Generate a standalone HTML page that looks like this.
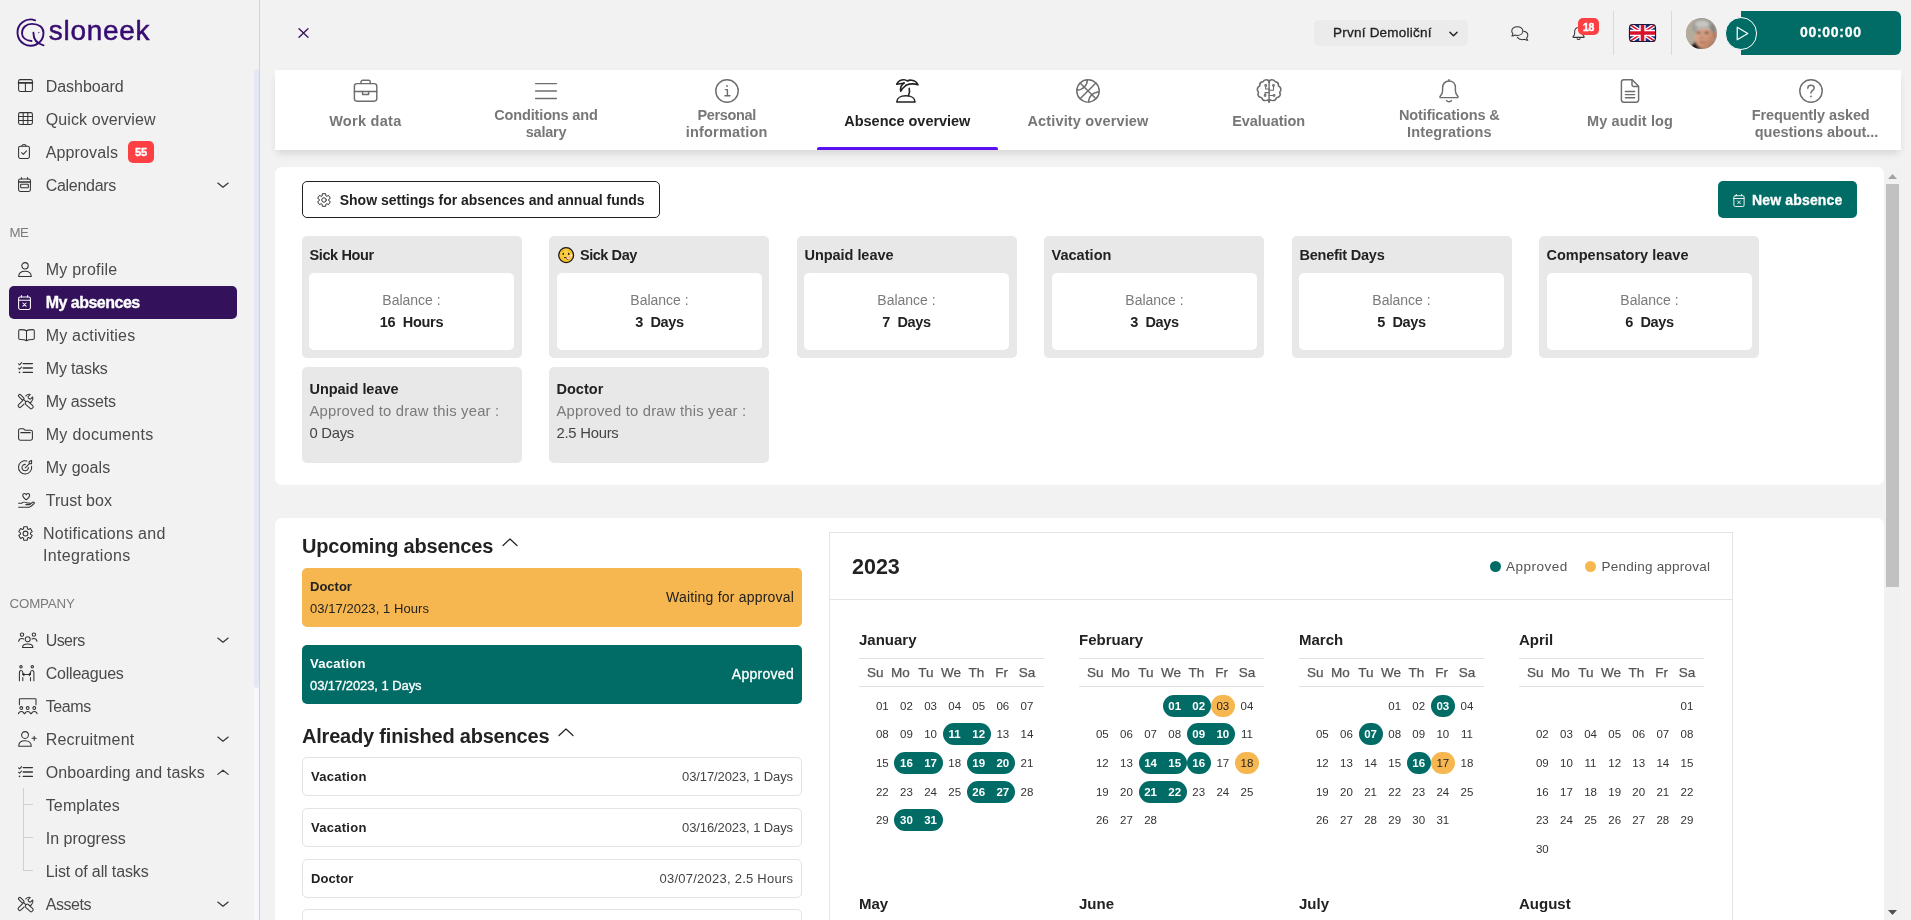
<!DOCTYPE html><html lang="en"><head><meta charset="utf-8"><title>Sloneek - My absences</title><style>
*{box-sizing:border-box}
html,body{margin:0;padding:0}
body{will-change:transform;width:1911px;height:920px;overflow:hidden;background:#f2f2f2;font-family:"Liberation Sans",sans-serif;color:#222;position:relative;font-size:16px}
.abs{position:absolute}
svg{display:block;overflow:visible}
/* sidebar */
#sb{position:absolute;left:0;top:0;width:260px;height:920px;border-right:1px solid #d3d3d3;background:#f2f2f2}
#sbtrack{position:absolute;left:254px;top:69px;width:5px;height:619px;background:#e4e8f3;border-radius:3px}
#sbtrack0{position:absolute;left:254px;top:69px;width:5px;height:860px;background:#f7f8fc;border-radius:3px 3px 0 0}
.logo-t{position:absolute;left:48.8px;top:13.3px;font-size:28px;line-height:36px;color:#370c70;letter-spacing:.7px;-webkit-text-stroke:.5px #370c70}
.ni{position:absolute;left:9px;width:228px;height:33px;border-radius:5px;color:#4a4a4a;font-size:16px;line-height:33px;white-space:nowrap}
.ni .ic{position:absolute;color:#333}
.ni .tx{position:absolute;left:36.7px;top:0}
.ni .ch{position:absolute;left:208px;top:13px;width:12px;height:7px;color:#333}
.ni.act{background:#33125b;color:#fff;font-weight:700;-webkit-text-stroke:.35px #fff}
.ni.act .ic{color:#fff}
.sec{position:absolute;left:9.5px;font-size:13.3px;color:#7a7a7a;line-height:16px}
.badge{position:absolute;background:#fd4044;-webkit-text-stroke:.4px #fff;color:#fff;font-weight:700;text-align:center;border-radius:4px}
/* header */
.sel{position:absolute;left:1314px;top:20px;width:154px;height:26px;background:#ebebeb;border-radius:5px}
.sel span{position:absolute;left:19px;top:-.3px;line-height:25px;font-size:13.5px;color:#222;-webkit-text-stroke:.3px #222;letter-spacing:.23px}
.vdiv{position:absolute;top:11px;width:1px;height:44px;background:#d9d9d9}
/* tabs */
#tabs{position:absolute;left:275px;top:70px;width:1626px;height:80px;background:#fff;box-shadow:0 5px 8px -2px rgba(0,0,0,.13)}
.tab{position:absolute;top:0;height:80px;width:180.67px;text-align:center;color:#777;font-weight:700;font-size:14.5px;line-height:17px}
.tab .ti{position:absolute;left:50%;top:9px;width:26px;height:24px;margin-left:-13px;color:#6d6d6d}
.tab .tl{position:absolute;left:0;right:0}
.tab.on{color:#222}
.tab.on .ti{color:#222}
.tab.on:after{content:"";position:absolute;left:0;right:0;bottom:0;height:3px;background:#5a10f0;border-radius:2px 2px 0 0}
/* cards */
.card{position:absolute;left:275px;width:1609px;background:#fff;border-radius:7px}
.btn1{position:absolute;left:27px;top:14px;width:358px;height:37px;border:1px solid #222;border-radius:5px;font-weight:700;font-size:14px;line-height:35px;color:#222;background:#fff}
.btn2{position:absolute;left:1443px;top:14px;width:139px;height:37px;border-radius:5px;background:#016c66;color:#fff;font-weight:700;font-size:14px;line-height:37px}
.gb{position:absolute;width:220px;background:#e8e8e8;border-radius:5px}
.gb .h{position:absolute;left:7.5px;top:10px;font-weight:700;font-size:14.5px;line-height:18px;color:#222;white-space:nowrap}
.gb .w{position:absolute;left:7px;top:37px;width:205px;height:77px;background:#fff;border-radius:5px;text-align:center}
.gb .w .a{position:absolute;left:0;right:0;top:18px;font-size:14px;line-height:18px;color:#7a7a7a}
.gb .w .b{position:absolute;left:0;right:0;top:40px;font-size:14.5px;line-height:18px;color:#222;font-weight:700;white-space:pre}
.gb .s1{position:absolute;left:7.5px;top:35px;font-size:14.8px;line-height:18px;color:#7a7a7a;white-space:nowrap}
.gb .s2{position:absolute;left:7.5px;top:57px;font-size:14.8px;line-height:18px;color:#444;white-space:nowrap}
h2{position:absolute;margin:0;font-size:20px;line-height:24px;font-weight:700;color:#222;white-space:nowrap;letter-spacing:-.2px}
.up{position:absolute;left:27px;width:500px;height:59px;border-radius:5px;font-size:13px}
.up .n{position:absolute;left:8px;top:10px;font-weight:700;line-height:16px}
.up .d{position:absolute;left:8px;top:32px;line-height:16px}
.up .st{position:absolute;right:8px;top:20px;line-height:18px;font-size:14px}
.fin{position:absolute;left:27px;width:500px;height:39px;border:1px solid #e3e3e3;border-radius:5px;font-size:13px;line-height:37px;background:#fff}
.fin .n{position:absolute;left:8px;font-weight:700;color:#222}
.fin .d{position:absolute;right:8px;color:#444}
/* calendar */
#cal{position:absolute;left:554px;top:14px;width:904px;height:500px;border:1px solid #e4e4e4;border-bottom:none}
#cal .yr{position:absolute;left:22px;top:21px;font-size:21.5px;line-height:26px;font-weight:700;color:#222}
#cal .hb{position:absolute;left:0;right:0;top:66px;height:1px;background:#e4e4e4}
.lg{position:absolute;top:26px;font-size:13.5px;line-height:16px;color:#555;white-space:nowrap}
.dot{position:absolute;width:11px;height:11px;border-radius:50%}
.mo{position:absolute;width:185px}
.mo .mn{position:absolute;left:0;top:-9px;font-size:15px;line-height:20px;font-weight:700;color:#222}
.mo .hd{position:absolute;left:0;top:19px;width:185px;height:29px;border-top:1px solid #e0e0e0;border-bottom:1px solid #e0e0e0}
.mo .hd span{position:absolute;top:0;width:30px;text-align:center;font-size:13.5px;line-height:27px;color:#555;-webkit-text-stroke:.25px #555}
.dn{position:absolute;width:24.1px;height:22px;text-align:center;font-size:11.5px;line-height:22px;color:#333}
.dn.t{color:#fff;font-weight:700}
.dn.o{color:#222}
.pill{position:absolute;height:22px;border-radius:11px}
</style></head><body>
<div id="sb">
<svg class="abs" style="left:15px;top:17px" viewBox="15 17 31 31" width="31" height="31" fill="none" stroke="#370c70" stroke-width="1.900" stroke-linecap="round"><path d="M35.100 20.300A13.100 13.100 0 1 0 36.500 44.300"/><path d="M31.500 41C26 40.500 22 37.700 22 33.200c0-5.600 4-9.300 10-9.300 7 0 11.500 3.600 11.500 8.800 0 4.500-2.500 9.300-7 11.600"/><path d="M33.400 32.800c0 5.200 2.600 10.700 10.200 12.500"/><path d="M38.300 31.700l1.400.9-1.400.9z" fill="#370c70" stroke="none"/></svg>
<div class="logo-t">sloneek</div>
<div id="sbtrack0"></div><div id="sbtrack"></div>
<div class="ni" style="top:70px"><span class="ic" style="left:9.0px;top:9.0px"><svg viewBox="0 0 15 13" width="15" height="13" fill="none" stroke="currentColor" stroke-width="1.05" stroke-linecap="round" stroke-linejoin="round" ><rect x=".6" y=".6" width="13.8" height="11.8" rx="1.6"/><path d="M.6 3.9h13.8" stroke-width="1.7"/><path d="M7.4 4v8.4"/></svg></span><span class="tx" style="letter-spacing:-0.03px">Dashboard</span></div>
<div class="ni" style="top:103px"><span class="ic" style="left:9.0px;top:9.0px"><svg viewBox="0 0 15 13" width="15" height="13" fill="none" stroke="currentColor" stroke-width="1.05" stroke-linecap="round" stroke-linejoin="round" ><rect x=".6" y=".6" width="13.8" height="11.8" rx="1.6"/><path d="M5.2.6v11.8M9.8.6v11.8M.6 4.5h13.8M.6 8.5h13.8"/></svg></span><span class="tx" style="letter-spacing:0.11px">Quick overview</span></div>
<div class="ni" style="top:136px"><span class="ic" style="left:9.0px;top:7.7px"><svg viewBox="0 0 12 15" width="12" height="15" fill="none" stroke="currentColor" stroke-width="1.05" stroke-linecap="round" stroke-linejoin="round" ><rect x=".6" y="2.2" width="10.8" height="12.2" rx="1.6"/><path d="M4 2.2V1.8a2 1.3 0 0 1 4 0v.4"/><path d="M3.6 8.6l1.7 1.7 3.2-3.5"/></svg></span><span class="tx" style="letter-spacing:0.13px">Approvals</span><span class="badge" style="left:119px;top:4.5px;width:26px;height:22px;font-size:11px;line-height:22.500px;border-radius:5px">55</span></div>
<div class="ni" style="top:169px"><span class="ic" style="left:9.0px;top:8.2px"><svg viewBox="0 0 13 15" width="13" height="15" fill="none" stroke="currentColor" stroke-width="1.05" stroke-linecap="round" stroke-linejoin="round" ><rect x=".6" y="2" width="11.8" height="12.4" rx="1.6"/><path d="M3.4.5v1.5M9.6.5v1.5"/><path d="M.6 5h11.8" stroke-width="1.6"/><rect x="2.7" y="7.2" width="7.6" height="3.6" rx=".5"/></svg></span><span class="tx" style="letter-spacing:-0.29px">Calendars</span><span class="ch"><svg viewBox="0 0 12 7" width="12" height="7" fill="none" stroke="currentColor" stroke-width="1.150" stroke-linecap="round" stroke-linejoin="round"><path d="M.800 1l5.200 4.200L11.200 1"/></svg></span></div>
<div class="sec" style="top:224.700px;letter-spacing:-0.48px">ME</div>
<div class="ni" style="top:253px"><span class="ic" style="left:9.0px;top:9.0px"><svg viewBox="0 0 14 15" width="14" height="15" fill="none" stroke="currentColor" stroke-width="1.05" stroke-linecap="round" stroke-linejoin="round" ><circle cx="7" cy="3.8" r="3.2"/><path d="M.7 14.4c0-3.3 2.4-5.2 6.3-5.2s6.3 1.9 6.3 5.2z"/></svg></span><span class="tx" style="letter-spacing:0.24px">My profile</span></div>
<div class="ni act" style="top:286px"><span class="ic" style="left:9.0px;top:9.3px"><svg viewBox="0 0 13 15" width="13" height="15" fill="none" stroke="currentColor" stroke-width="1.05" stroke-linecap="round" stroke-linejoin="round" ><rect x=".6" y="2" width="11.8" height="12.4" rx="1.6"/><path d="M3.4.5v1.5M9.6.5v1.5"/><path d="M.6 5.2h11.8"/><path d="M4.9 8l3.2 3.2M8.1 8l-3.2 3.2"/></svg></span><span class="tx" style="letter-spacing:-0.51px">My absences</span></div>
<div class="ni" style="top:319px"><span class="ic" style="left:9.0px;top:10.2px"><svg viewBox="0 0 17 13" width="17" height="13" fill="none" stroke="currentColor" stroke-width="1.05" stroke-linecap="round" stroke-linejoin="round" ><path d="M8.500 1.700v10.100M8.500 1.700C7.500 1 6 .600 2.200.600A1.500 1.500 0 0 0 .700 2.100V9a1.500 1.500 0 0 0 1.500 1.500c3.600 0 5.200.400 6.300 1.300 1.100-.900 2.700-1.300 6.300-1.300A1.500 1.500 0 0 0 16.300 9V2.100A1.500 1.500 0 0 0 14.800.600C11 .600 9.500 1 8.500 1.700z"/></svg></span><span class="tx" style="letter-spacing:0.2px">My activities</span></div>
<div class="ni" style="top:352px"><span class="ic" style="left:9.0px;top:10.3px"><svg viewBox="0 0 16 12" width="16" height="12" fill="none" stroke="currentColor" stroke-width="1.05" stroke-linecap="round" stroke-linejoin="round" ><path d="M5.200 1.600h9.200M5.200 6h9.200M5.200 10.400h9.200" stroke-width="1.300"/><path d="M.600 1.800l1 1 2-2.200M.600 6.200l1 1 2-2.200"/><circle cx="1.500" cy="10.400" r=".800" fill="currentColor" stroke="none"/></svg></span><span class="tx" style="letter-spacing:-0.14px">My tasks</span></div>
<div class="ni" style="top:385px"><span class="ic" style="left:9.0px;top:9.0px"><svg viewBox="0 0 16 15" width="16" height="15" fill="none" stroke="currentColor" stroke-width="1.05" stroke-linecap="round" stroke-linejoin="round" ><g transform="rotate(45 3.2 3.2)"><rect x="0" y="1.900" width="6.400" height="2.600" rx=".900"/></g><path d="M5.800 5.600l2 2"/><g transform="rotate(42 11.300 11)"><rect x="6.700" y="9.100" width="9" height="3.800" rx="1.500"/></g><g transform="rotate(-45 3.300 10.300)"><path d="M7.300 8.600H1.200a1.700 1.700 0 0 0 0 3.400h4.200"/></g><path d="M7.800 1.900C9.200.500 11 .100 12.300.500L10.100 2.700c-.300 1.300.900 2.600 2.300 2.400l2.300-2.100c.600 1.500.200 3.300-1.100 4.600-.500.500-1.100.800-1.700 1"/></svg></span><span class="tx" style="letter-spacing:-0.22px">My assets</span></div>
<div class="ni" style="top:418px"><span class="ic" style="left:9.0px;top:9.8px"><svg viewBox="0 0 15 13" width="15" height="13" fill="none" stroke="currentColor" stroke-width="1.05" stroke-linecap="round" stroke-linejoin="round" ><path d="M.6 2.300A1.600 1.600 0 0 1 2.200.700h3.200l1.600 1.500h5.800a1.600 1.600 0 0 1 1.600 1.600v6.800a1.600 1.600 0 0 1-1.600 1.600H2.200A1.600 1.600 0 0 1 .6 10.600z"/><path d="M2.900 4.700h9.300" stroke-width="1.300"/></svg></span><span class="tx" style="letter-spacing:0.33px">My documents</span></div>
<div class="ni" style="top:451px"><span class="ic" style="left:9.0px;top:9.0px"><svg viewBox="0 0 15 15" width="15" height="15" fill="none" stroke="currentColor" stroke-width="1.05" stroke-linecap="round" stroke-linejoin="round" ><path d="M13.600 6.200A6.600 6.600 0 1 1 8.800 1"/><path d="M10.400 7.600A3.200 3.200 0 1 1 7.400 4.400"/><path d="M7.200 7.800l4-4M11.200 3.800V1.400l2.400-1v2.400l-1 1zM11.200 3.800h2.400"/></svg></span><span class="tx" style="letter-spacing:0.06px">My goals</span></div>
<div class="ni" style="top:484px"><span class="ic" style="left:9.0px;top:9.2px"><svg viewBox="0 0 17 15" width="17" height="15" fill="none" stroke="currentColor" stroke-width="1.05" stroke-linecap="round" stroke-linejoin="round" ><path d="M8.200 6.800C5.400 4.600 4.800 3.400 4.800 2.400a1.700 1.700 0 0 1 3.400-.4 1.700 1.700 0 0 1 3.400.4c0 1-.6 2.200-3.400 4.400z"/><path d="M.6 10.200h3.200c1.200-1.400 3.800-1.200 5.400-.2h2.200c1.200 0 1.200 1.600 0 1.600H7.800"/><path d="M.6 14.200h9.800c1.400 0 4.200-2 5.800-3.800.6-.8-.4-1.800-1.400-1.200l-3 2"/></svg></span><span class="tx" style="letter-spacing:0.02px">Trust box</span></div>
<div class="ni" style="top:517px"><span class="ic" style="left:9.0px;top:9.0px"><svg viewBox="0 0 15 15" width="15" height="15" fill="none" stroke="currentColor" stroke-width="1.05" stroke-linecap="round" stroke-linejoin="round" ><path d="M5.51 2.91 L5.69 0.74 L9.31 0.74 L9.49 2.91 L10.48 3.49 L12.45 2.55 L14.26 5.69 L12.47 6.93 L12.47 8.07 L14.26 9.31 L12.45 12.45 L10.48 11.51 L9.49 12.09 L9.31 14.26 L5.69 14.26 L5.51 12.09 L4.52 11.51 L2.55 12.45 L0.74 9.31 L2.53 8.07 L2.53 6.93 L0.74 5.69 L2.55 2.55 L4.52 3.49z"/><circle cx="7.5" cy="7.5" r="2.4"/></svg></span><span class="tx" style="left:34px;letter-spacing:0.25px">Notifications and</span></div>
<div class="ni" style="top:539px"><span class="tx" style="left:34px;letter-spacing:0.32px">Integrations</span></div>
<div class="sec" style="top:596px;letter-spacing:-0.14px">COMPANY</div>
<div class="ni" style="top:624px"><span class="ic" style="left:9.0px;top:7.7px"><svg viewBox="0 0 20 16" width="20" height="16" fill="none" stroke="currentColor" stroke-width="1.05" stroke-linecap="round" stroke-linejoin="round" ><circle cx="9.700" cy="7.200" r="2.500"/><path d="M4.500 15.500c0-2.400 2-3.600 5.200-3.600s5.200 1.200 5.200 3.600z"/><circle cx="4" cy="2.600" r="1.700"/><circle cx="15.900" cy="2.600" r="1.700"/><path d="M.600 9.300c.400-1.800 1.600-2.800 3.200-2.800.800 0 1.400.200 1.800.500M19 9.300c-.400-1.800-1.600-2.800-3.200-2.800-.800 0-1.400.200-1.800.500"/></svg></span><span class="tx" style="letter-spacing:-0.56px">Users</span><span class="ch"><svg viewBox="0 0 12 7" width="12" height="7" fill="none" stroke="currentColor" stroke-width="1.150" stroke-linecap="round" stroke-linejoin="round"><path d="M.800 1l5.200 4.200L11.200 1"/></svg></span></div>
<div class="ni" style="top:657px"><span class="ic" style="left:9.0px;top:8.0px"><svg viewBox="0 0 17 16" width="17" height="16" fill="none" stroke="currentColor" stroke-width="1.05" stroke-linecap="round" stroke-linejoin="round" ><circle cx="3" cy="1.800" r="1.200"/><circle cx="14.300" cy="1.800" r="1.200"/><path d="M1.400 15.700V8c0-1.600.600-2.600 1.600-2.600s1.800.800 1.800 2v2.100M4.800 12.600v3.100"/><path d="M15.900 15.700V8c0-1.600-.600-2.600-1.600-2.600s-1.800.800-1.800 2v2.100M12.500 12.600v3.100"/><path d="M4.800 9.500h7.700M6 8.300L4.800 9.500 6 10.700M11.300 8.300l1.200 1.200-1.200 1.200"/></svg></span><span class="tx" style="letter-spacing:-0.21px">Colleagues</span></div>
<div class="ni" style="top:690px"><span class="ic" style="left:9.0px;top:7.8px"><svg viewBox="0 0 20 16" width="20" height="16" fill="none" stroke="currentColor" stroke-width="1.05" stroke-linecap="round" stroke-linejoin="round" ><path d="M1.400 6.700V1.400a.700.700 0 0 1 .700-.700h15.200a.700.700 0 0 1 .700.700v5.300"/><circle cx="3.300" cy="10" r="1.400"/><circle cx="9.700" cy="10" r="1.400"/><circle cx="16.300" cy="10" r="1.400"/><path d="M.500 15.700c.300-1.500 1.300-2.300 2.800-2.300s2.500.800 2.800 2.300M6.900 15.700c.300-1.500 1.300-2.300 2.800-2.300s2.500.800 2.800 2.300M13.500 15.700c.300-1.500 1.300-2.300 2.800-2.300s2.500.800 2.800 2.300"/></svg></span><span class="tx" style="letter-spacing:-0.38px">Teams</span></div>
<div class="ni" style="top:723px"><span class="ic" style="left:9.0px;top:8.0px"><svg viewBox="0 0 19 16" width="19" height="16" fill="none" stroke="currentColor" stroke-width="1.05" stroke-linecap="round" stroke-linejoin="round" ><circle cx="7" cy="4" r="3.400"/><path d="M.7 15.200c0-3.400 2.400-5.400 6.300-5.400s6.300 2 6.300 5.400z"/><path d="M16.200 5.200v4.200M14.100 7.300h4.200"/></svg></span><span class="tx" style="letter-spacing:0.23px">Recruitment</span><span class="ch"><svg viewBox="0 0 12 7" width="12" height="7" fill="none" stroke="currentColor" stroke-width="1.150" stroke-linecap="round" stroke-linejoin="round"><path d="M.800 1l5.200 4.200L11.200 1"/></svg></span></div>
<div class="ni" style="top:756px"><span class="ic" style="left:9.0px;top:9.8px"><svg viewBox="0 0 16 12" width="16" height="12" fill="none" stroke="currentColor" stroke-width="1.05" stroke-linecap="round" stroke-linejoin="round" ><path d="M5.200 1.600h9.200M5.200 6h9.200M5.200 10.400h9.200" stroke-width="1.300"/><path d="M.600 1.800l1 1 2-2.200M.600 6.200l1 1 2-2.200"/><circle cx="1.500" cy="10.400" r=".800" fill="currentColor" stroke="none"/></svg></span><span class="tx" style="letter-spacing:0.13px">Onboarding and tasks</span><span class="ch"><svg viewBox="0 0 12 7" width="12" height="7" fill="none" stroke="currentColor" stroke-width="1.150" stroke-linecap="round" stroke-linejoin="round"><path d="M.800 5.400L6 1.200l5.200 4.200"/></svg></span></div>
<div class="abs" style="left:23px;top:788px;width:1px;height:83px;background:#d0d0d0"></div>
<div class="abs" style="left:23px;top:804px;width:10px;height:1px;background:#d0d0d0"></div>
<div class="ni" style="top:789px"><span class="tx" style="letter-spacing:0.15px">Templates</span></div>
<div class="abs" style="left:23px;top:837px;width:10px;height:1px;background:#d0d0d0"></div>
<div class="ni" style="top:822px"><span class="tx" style="letter-spacing:0.01px">In progress</span></div>
<div class="abs" style="left:23px;top:870px;width:10px;height:1px;background:#d0d0d0"></div>
<div class="ni" style="top:855px"><span class="tx" style="letter-spacing:-0.12px">List of all tasks</span></div>
<div class="ni" style="top:888px"><span class="ic" style="left:9.0px;top:9.0px"><svg viewBox="0 0 16 15" width="16" height="15" fill="none" stroke="currentColor" stroke-width="1.05" stroke-linecap="round" stroke-linejoin="round" ><g transform="rotate(45 3.2 3.2)"><rect x="0" y="1.900" width="6.400" height="2.600" rx=".900"/></g><path d="M5.800 5.600l2 2"/><g transform="rotate(42 11.300 11)"><rect x="6.700" y="9.100" width="9" height="3.800" rx="1.500"/></g><g transform="rotate(-45 3.300 10.300)"><path d="M7.300 8.600H1.200a1.700 1.700 0 0 0 0 3.400h4.200"/></g><path d="M7.800 1.900C9.200.500 11 .100 12.300.500L10.100 2.700c-.300 1.300.900 2.600 2.300 2.400l2.300-2.100c.600 1.500.200 3.300-1.100 4.600-.500.500-1.100.800-1.700 1"/></svg></span><span class="tx" style="letter-spacing:-0.42px">Assets</span><span class="ch"><svg viewBox="0 0 12 7" width="12" height="7" fill="none" stroke="currentColor" stroke-width="1.150" stroke-linecap="round" stroke-linejoin="round"><path d="M.800 1l5.200 4.200L11.200 1"/></svg></span></div>
</div>
<svg class="abs" style="left:298px;top:28px" viewBox="0 0 11 10" width="11" height="10" fill="none" stroke="#33125b" stroke-width="1.300" stroke-linecap="round"><path d="M1 .8l9 8.400M10 .8l-9 8.400"/></svg>
<div class="sel"><span>První Demoliční</span><svg class="abs" style="left:135px;top:10.5px" viewBox="0 0 10 6" width="9" height="6" fill="none" stroke="#222" stroke-width="1.6" stroke-linecap="round" stroke-linejoin="round"><path d="M1 1l4 4 4-4"/></svg></div>
<svg class="abs" style="left:1510.600px;top:25.500px" viewBox="0 0 19 16" width="17.600" height="14.800" fill="none" stroke="#333" stroke-width="1.100" stroke-linejoin="round" stroke-linecap="round"><path d="M6.800.8C3.400.8.800 2.800.800 5.400c0 1.200.6 2.200 1.400 3-.2 1-.8 1.800-1.400 2.400 1.400 0 2.600-.4 3.400-1 .8.200 1.600.4 2.600.4 3.400 0 6-2 6-4.800S10.200.8 6.800.8z"/><path d="M13.600 5.600c2.600.4 4.600 2.200 4.600 4.400 0 1.200-.6 2.200-1.400 3 .2 1 .8 1.800 1.400 2.400-1.400 0-2.600-.4-3.400-1-.8.200-1.600.4-2.600.4-2.400 0-4.400-1-5.400-2.600"/></svg>
<svg class="abs" style="left:1571.700px;top:26.300px" viewBox="0 0 14 15" width="13.200" height="14" fill="none" stroke="#333" stroke-width="1.100" stroke-linejoin="round" stroke-linecap="round"><path d="M7 .6v1M7 1.600c-2.600 0-4.200 1.800-4.200 4.400v2c0 1.200-.6 2.200-1.600 3.200-.4.400-.2 1 .4 1h10.800c.6 0 .8-.6.4-1-1-1-1.600-2-1.600-3.200V6c0-2.600-1.600-4.400-4.200-4.400z"/><path d="M5.400 13.600c.4 1 2.800 1 3.200 0"/></svg>
<span class="badge" style="left:1578px;top:18px;width:21px;height:17px;font-size:10.500px;line-height:18.500px;border-radius:5px;letter-spacing:-.3px;background:#fd4044">18</span>
<div class="vdiv" style="left:1613px"></div>
<svg class="abs" style="left:1629px;top:24px" viewBox="0 0 60 40" width="27" height="18" preserveAspectRatio="none"><defs><clipPath id="fc"><rect x="0" y="0" width="60" height="40" rx="8"/></clipPath></defs><g clip-path="url(#fc)"><rect width="60" height="40" fill="#1c2a7a"/><path d="M0 0L60 40M60 0L0 40" stroke="#fff" stroke-width="9"/><path d="M0 0L60 40M60 0L0 40" stroke="#d8112c" stroke-width="3.500"/><path d="M30 0v40M0 20h60" stroke="#fff" stroke-width="14"/><path d="M30 0v40M0 20h60" stroke="#d8112c" stroke-width="8"/></g><rect x="1" y="1" width="58" height="38" rx="8" fill="none" stroke="#1a1a3a" stroke-width="2.500"/></svg>
<div class="vdiv" style="left:1671px"></div>
<svg class="abs" style="left:1686px;top:17.800px" viewBox="0 0 31 31" width="31" height="31"><defs><clipPath id="ac"><circle cx="15.500" cy="15.500" r="15.500"/></clipPath><filter id="ab" x="-20%" y="-20%" width="140%" height="140%"><feGaussianBlur stdDeviation=".900"/></filter><linearGradient id="ag" x1="0" y1="0" x2="1" y2="1"><stop offset="0" stop-color="#e0ad94"/><stop offset=".55" stop-color="#cf967a"/><stop offset="1" stop-color="#a86c50"/></linearGradient></defs><g clip-path="url(#ac)"><rect width="31" height="31" fill="#aaa293"/><g filter="url(#ab)"><rect x="-2" y="-2" width="11" height="35" fill="#b3ab9b"/><ellipse cx="17.500" cy="9" rx="11" ry="9" fill="#9d9c97"/><ellipse cx="26.500" cy="13.500" rx="3.200" ry="7" fill="#85847f"/><ellipse cx="16" cy="6" rx="7" ry="3.600" fill="#c6c6c3"/><ellipse cx="18.300" cy="20.500" rx="9.700" ry="11.300" fill="url(#ag)"/><ellipse cx="28.600" cy="17.500" rx="1.800" ry="3.400" fill="#b47a5e"/><path d="M8.500 12.500c2-3.500 6-4.500 10-4.200 3 .200 5.500 1.300 7 3.700-3-1.200-5.500-1.500-8.500-1.300-3.500.200-6 .700-8.500 1.800z" fill="#b9b8b4"/><ellipse cx="12.800" cy="14.700" rx="2.300" ry=".900" fill="#5e4438"/><ellipse cx="20.600" cy="14.800" rx="2.600" ry="1" fill="#5e4438"/><ellipse cx="15.200" cy="19.800" rx="1.300" ry="1.600" fill="#b98068"/><ellipse cx="16.300" cy="24.300" rx="3.200" ry=".800" fill="#a25e52"/><path d="M2 28.500c3-1 5.500-2.500 7.300-5 1 3.500 4 6.500 8.500 8H2z" fill="#161616"/><path d="M30 21c-1 4.500-4 8.500-9 10.500h9z" fill="#2c1c16"/></g></g></svg>
<div class="abs" style="left:1741px;top:11px;width:160px;height:44px;background:#016c66;border-radius:0 6px 6px 0"></div>
<div class="abs" style="left:1724.6px;top:17px;width:32.6px;height:32.6px;border-radius:50%;background:#016c66;border:1px solid #fff"></div>
<svg class="abs" style="left:1736px;top:25.5px" viewBox="0 0 13 15" width="13" height="15" fill="none" stroke="#fff" stroke-width="1.2" stroke-linejoin="round"><path d="M1.2 1.2v12.6L11.8 7.5z"/></svg>
<div class="abs" style="left:1770px;top:21.7px;width:121px;text-align:center;color:#fff;font-weight:700;font-size:14px;line-height:21px;letter-spacing:.7px;text-indent:.7px;-webkit-text-stroke:.3px #fff">00:00:00</div>
<div id="tabs">
<div class="tab" style="left:0.00px"><span class="ti"><svg viewBox="0 0 26 24" width="26" height="24" fill="none" stroke="currentColor" stroke-width="1.45" stroke-linecap="round" stroke-linejoin="round"><rect x="2.400" y="4.600" width="22.400" height="17.600" rx="2.600"/><path d="M9 4.600V3A1.800 1.800 0 0 1 10.800 1.200h5.600A1.800 1.800 0 0 1 18.200 3v1.600"/><path d="M2.400 12.400h22.400"/><path d="M10.600 12.400v3h6v-3"/></svg></span><span class="tl" style="top:42.5px"><span style="letter-spacing:0.28px">Work data</span></span></div>
<div class="tab" style="left:180.67px"><span class="ti"><svg viewBox="0 0 26 24" width="26" height="24" fill="none" stroke="currentColor" stroke-width="1.45" stroke-linecap="round" stroke-linejoin="round"><path d="M2.600 4.600h20.800M2.600 12h20.800M2.600 19.400h20.800"/></svg></span><span class="tl" style="top:36.5px"><span style="letter-spacing:-0.15px">Conditions and</span><br><span style="letter-spacing:-0.24px">salary</span></span></div>
<div class="tab" style="left:361.33px"><span class="ti"><svg viewBox="0 0 26 24" width="26" height="24" fill="none" stroke="currentColor" stroke-width="1.45" stroke-linecap="round" stroke-linejoin="round"><circle cx="13" cy="12" r="11.200"/><path d="M11.400 10.600H13.400v6M11 16.800h5"/><circle cx="13" cy="7" r=".9" fill="currentColor" stroke="none"/></svg></span><span class="tl" style="top:36.5px"><span style="letter-spacing:-0.34px">Personal</span><br><span style="letter-spacing:0.17px">information</span></span></div>
<div class="tab on" style="left:542.00px"><span class="ti"><svg viewBox="0 0 26 24" width="26" height="24" fill="none" stroke="currentColor" stroke-width="1.45" stroke-linecap="round" stroke-linejoin="round"><g stroke-width="1.6"><path d="M2.800 5.200C4 2.200 7 .700 10 .700c1.400 0 2.500.500 3.300 1.300 1.300-.800 3-1 4.400-.800 3 .400 5.300 2 6.300 4.600-3.600-1.200-7.800-1.300-12 .500"/><path d="M2.800 5.200c2.400-.500 5-.500 7.200-1.300"/><path d="M10 4c-2.800 2-4 5-3.200 8.200 1.300-2.400 3-4.300 5.200-5.900"/><path d="M15.200 9.400c.800 2.600.400 5-.800 7.300"/><path d="M2.800 23c0-3.600 3.400-6.200 9.100-6.200s9.100 2.600 9.100 6.200z"/></g></svg></span><span class="tl" style="top:42.5px"><span style="letter-spacing:-0.03px">Absence overview</span></span></div>
<div class="tab" style="left:722.67px"><span class="ti"><svg viewBox="0 0 26 24" width="26" height="24" fill="none" stroke="currentColor" stroke-width="1.45" stroke-linecap="round" stroke-linejoin="round"><circle cx="13" cy="11.900" r="11.200"/><path d="M5.100 4l15.800 15.800M20.900 4L5.100 19.800"/><path d="M12.200.700C12.800 5.800 8.400 10.600 1.800 11.200M24.200 12.700C17.600 13.300 13.200 18.100 13.800 23.100"/></svg></span><span class="tl" style="top:42.5px"><span style="letter-spacing:0.15px">Activity overview</span></span></div>
<div class="tab" style="left:903.34px"><span class="ti"><svg viewBox="0 0 26 24" width="26" height="24" fill="none" stroke="currentColor" stroke-width="1.45" stroke-linecap="round" stroke-linejoin="round"><g transform="translate(13.100 0) scale(1.090 1) translate(-13.100 0)"><path d="M13.100 3.200C13.100 1.800 11.900.700 10.400.700 9 .700 7.900 1.500 7.500 2.800 5.800 2.900 4.500 4.200 4.500 5.900c0 .300 0 .600.100.900C3.200 7.500 2.300 8.900 2.300 10.500c0 1.100.400 2.100 1.100 2.800-.300.500-.500 1.100-.500 1.800 0 1.900 1.500 3.400 3.400 3.500.300 1.700 1.700 3 3.500 3 .900 0 1.700-.300 2.300-.900.600.600 1 1.400 1 2.400"/><path d="M13.100 3.200c0-1.400 1.200-2.500 2.700-2.500 1.400 0 2.500.800 2.900 2.100 1.700.100 3 1.400 3 3.100 0 .300 0 .600-.100.900 1.400.700 2.300 2.100 2.300 3.700 0 1.100-.400 2.100-1.100 2.800.300.500.500 1.100.500 1.800 0 1.900-1.500 3.400-3.400 3.500-.300 1.700-1.700 3-3.500 3-.900 0-1.700-.300-2.300-.900-.600.600-1 1.400-1 2.400"/></g><path d="M13.100 3.200v19.900"/><path d="M13.100 10H9.700V7.400M13.100 11.200h4.400V7.400M13.100 13.600H9.100v2M13.100 16.500h4" stroke-width="1.100"/><circle cx="9.700" cy="6.500" r=".900" stroke-width="1.100"/><circle cx="9.100" cy="16.500" r=".900" stroke-width="1.100"/><circle cx="17.500" cy="6.500" r=".900" stroke-width="1.100"/><circle cx="18" cy="16.500" r=".900" stroke-width="1.100"/></svg></span><span class="tl" style="top:42.5px"><span style="letter-spacing:-0.03px">Evaluation</span></span></div>
<div class="tab" style="left:1084.00px"><span class="ti"><svg viewBox="0 0 26 24" width="26" height="24" fill="none" stroke="currentColor" stroke-width="1.45" stroke-linecap="round" stroke-linejoin="round"><path d="M13 .600v1.400"/><path d="M13 2c-3.800 0-6.400 2.800-6.400 6.600v3.200c0 2-.800 3.800-2.400 5.400-.600.600-.300 1.400.700 1.400h16.200c1 0 1.300-.800.700-1.400-1.600-1.600-2.400-3.400-2.400-5.400V8.600C19.400 4.800 16.800 2 13 2z"/><path d="M10.600 21.600c.800 1.400 4 1.400 4.800 0"/></svg></span><span class="tl" style="top:36.5px"><span style="letter-spacing:-0.11px">Notifications &amp;</span><br><span style="letter-spacing:0.13px">Integrations</span></span></div>
<div class="tab" style="left:1264.67px"><span class="ti"><svg viewBox="0 0 26 24" width="26" height="24" fill="none" stroke="currentColor" stroke-width="1.45" stroke-linecap="round" stroke-linejoin="round"><path d="M4.400 3.200A2.400 2.400 0 0 1 6.800.8h8.400l6.400 6.400v13.600a2.400 2.400 0 0 1-2.400 2.400H6.800a2.400 2.400 0 0 1-2.400-2.400z"/><path d="M15 1v5a1.400 1.400 0 0 0 1.400 1.400h5"/><path d="M8.400 12.400h9.200M8.400 15.600h9.200M8.400 18.800h9.200"/></svg></span><span class="tl" style="top:42.5px"><span style="letter-spacing:0.12px">My audit log</span></span></div>
<div class="tab" style="left:1445.34px"><span class="ti"><svg viewBox="0 0 26 24" width="26" height="24" fill="none" stroke="currentColor" stroke-width="1.45" stroke-linecap="round" stroke-linejoin="round"><circle cx="13" cy="12" r="11.200"/><path d="M9.800 9.200c0-1.800 1.400-3 3.200-3s3.200 1.200 3.200 2.800c0 2.400-3.200 2.400-3.200 5"/><circle cx="13" cy="17.400" r=".9" fill="currentColor" stroke="none"/></svg></span><span class="tl" style="top:36.5px"><span style="letter-spacing:-0.08px">Frequently asked</span><br><span style="letter-spacing:-0.03px;padding-left:11.700px">questions about...</span></span></div>
</div>
<div class="card" style="top:167px;height:318px">
<div class="btn1"><span class="abs" style="left:14px;top:11px;color:#333"><svg viewBox="0 0 15 15" width="14" height="14" fill="none" stroke="currentColor" stroke-width="1.05" stroke-linecap="round" stroke-linejoin="round" ><path d="M5.51 2.91 L5.69 0.74 L9.31 0.74 L9.49 2.91 L10.48 3.49 L12.45 2.55 L14.26 5.69 L12.47 6.93 L12.47 8.07 L14.26 9.31 L12.45 12.45 L10.48 11.51 L9.49 12.09 L9.31 14.26 L5.69 14.26 L5.51 12.09 L4.52 11.51 L2.55 12.45 L0.74 9.31 L2.53 8.07 L2.53 6.93 L0.74 5.69 L2.55 2.55 L4.52 3.49z"/><circle cx="7.5" cy="7.5" r="2.4"/></svg></span><span class="abs" style="left:36.700px;top:.7px;white-space:nowrap">Show settings for absences and annual funds</span></div>
<div class="btn2"><span class="abs" style="left:15px;top:12.500px"><svg viewBox="0 0 13 15" width="12" height="13" fill="none" stroke="currentColor" stroke-width="1.05" stroke-linecap="round" stroke-linejoin="round" ><rect x=".6" y="2" width="11.8" height="12.4" rx="1.6"/><path d="M3.4.5v1.5M9.6.5v1.5"/><path d="M.6 5.2h11.8"/><path d="M4.9 8l3.2 3.2M8.1 8l-3.2 3.2"/></svg></span><span class="abs" style="left:34px;top:1px;white-space:nowrap;-webkit-text-stroke:.3px #fff;letter-spacing:0.16px">New absence</span></div>
<div class="gb" style="left:27.0px;top:69px;height:122px"><span class="h" style="letter-spacing:-0.39px">Sick Hour</span><div class="w" style="left:7px"><span class="a">Balance :</span><span class="b" style="letter-spacing:-0.3px">16  Hours</span></div></div>
<div class="gb" style="left:274.0px;top:69px;height:122px"><svg class="abs" style="left:9.400px;top:10.900px" viewBox="0 0 16.300 16.300" width="16.300" height="16.300"><defs><radialGradient id="eg" cx="50%" cy="35%" r="70%"><stop offset="0" stop-color="#fed54a"/><stop offset="1" stop-color="#f6b924"/></radialGradient></defs><circle cx="8.150" cy="8.150" r="7.450" fill="url(#eg)" stroke="#161616" stroke-width="1.250"/><ellipse cx="5.300" cy="6.900" rx=".800" ry="1.100" fill="#1d1d1d"/><ellipse cx="10.700" cy="6.900" rx=".800" ry="1.100" fill="#1d1d1d"/><path d="M3.700 4.600c.600-.800 1.400-1.100 2.200-1M12.400 4.600c-.600-.800-1.400-1.100-2.200-1" fill="none" stroke="#e9a21c" stroke-width=".900" stroke-linecap="round"/><path d="M6.400 10.600c1.400-.500 2.600.400 3.400 1.900" fill="none" stroke="#1d1d1d" stroke-width="1" stroke-linecap="round"/><path d="M10 11.300l3.200-2.900" stroke="#fff" stroke-width="1.700" stroke-linecap="round"/><path d="M10.600 10.800l1.700-1.500" stroke="#e8402c" stroke-width=".900" stroke-linecap="round"/></svg><span class="h" style="left:30.900px;letter-spacing:-0.43px">Sick Day</span><div class="w" style="left:8px"><span class="a">Balance :</span><span class="b" style="letter-spacing:-0.33px">3  Days</span></div></div>
<div class="gb" style="left:522.0px;top:69px;height:122px"><span class="h" style="letter-spacing:-0.04px">Unpaid leave</span><div class="w" style="left:7px"><span class="a">Balance :</span><span class="b" style="letter-spacing:-0.33px">7  Days</span></div></div>
<div class="gb" style="left:769.0px;top:69px;height:122px"><span class="h" style="letter-spacing:0.04px">Vacation</span><div class="w" style="left:8px"><span class="a">Balance :</span><span class="b" style="letter-spacing:-0.33px">3  Days</span></div></div>
<div class="gb" style="left:1017.0px;top:69px;height:122px"><span class="h" style="letter-spacing:-0.24px">Benefit Days</span><div class="w" style="left:7px"><span class="a">Balance :</span><span class="b" style="letter-spacing:-0.33px">5  Days</span></div></div>
<div class="gb" style="left:1264.0px;top:69px;height:122px"><span class="h" style="letter-spacing:0.01px">Compensatory leave</span><div class="w" style="left:8px"><span class="a">Balance :</span><span class="b" style="letter-spacing:-0.33px">6  Days</span></div></div>
<div class="gb" style="left:27.0px;top:200px;height:96px"><span class="h" style="top:13px;letter-spacing:-0.04px">Unpaid leave</span><span class="s1" style="letter-spacing:0.2px">Approved to draw this year :</span><span class="s2" style="letter-spacing:-0.26px">0 Days</span></div>
<div class="gb" style="left:274.0px;top:200px;height:96px"><span class="h" style="top:13px;letter-spacing:0.01px">Doctor</span><span class="s1" style="letter-spacing:0.2px">Approved to draw this year :</span><span class="s2" style="letter-spacing:-0.24px">2.5 Hours</span></div>
</div>
<div class="card" style="top:518px;height:420px;border-radius:7px 7px 0 0">
<h2 style="left:27px;top:16px">Upcoming absences</h2><svg class="abs" style="left:227px;top:20px" viewBox="0 0 16 8" width="16" height="8" fill="none" stroke="#222" stroke-width="1.2" stroke-linecap="round" stroke-linejoin="round"><path d="M1 7.5l7-6.5 7 6.5"/></svg>
<div class="up" style="top:50px;background:#f7b750;color:#222"><span class="n" style="top:11px">Doctor</span><span class="d" style="top:33px;letter-spacing:0.06px">03/17/2023, 1 Hours</span><span class="st" style="letter-spacing:0.2px">Waiting for approval</span></div>
<div class="up" style="top:127px;background:#016c66;color:#fff"><span class="n" style="top:10.5px;letter-spacing:0.29px">Vacation</span><span class="d" style="top:32.5px;-webkit-text-stroke:.3px #fff;letter-spacing:-0.07px">03/17/2023, 1 Days</span><span class="st" style="-webkit-text-stroke:.3px #fff;letter-spacing:0.28px">Approved</span></div>
<h2 style="left:27px;top:206px">Already finished absences</h2><svg class="abs" style="left:283px;top:210px" viewBox="0 0 16 8" width="16" height="8" fill="none" stroke="#222" stroke-width="1.2" stroke-linecap="round" stroke-linejoin="round"><path d="M1 7.5l7-6.5 7 6.5"/></svg>
<div class="fin" style="top:239.3px"><span class="n" style="letter-spacing:0.28px">Vacation</span><span class="d" style="letter-spacing:-0.1px;margin-right:-0.00px">03/17/2023, 1 Days</span></div>
<div class="fin" style="top:290.0px"><span class="n" style="letter-spacing:0.28px">Vacation</span><span class="d" style="letter-spacing:-0.1px;margin-right:-0.00px">03/16/2023, 1 Days</span></div>
<div class="fin" style="top:340.6px"><span class="n" style="letter-spacing:0.07px">Doctor</span><span class="d" style="letter-spacing:0.24px;margin-right:-0.24px">03/07/2023, 2.5 Hours</span></div>
<div class="fin" style="top:391.3px"></div>
<div id="cal"><div class="yr">2023</div><div class="hb"></div>
<span class="dot" style="left:660px;top:28px;background:#016c66"></span><span class="lg" style="left:676px;letter-spacing:0.5px">Approved</span>
<span class="dot" style="left:755px;top:28px;background:#f7b750"></span><span class="lg" style="left:771.5px;letter-spacing:0.23px">Pending approval</span>
<div class="mo" style="left:29px;top:106px"><span class="mn">January</span>
<div class="hd"><span style="left:1.2px">Su</span><span style="left:26.5px">Mo</span><span style="left:51.8px">Tu</span><span style="left:77.1px">We</span><span style="left:102.4px">Th</span><span style="left:127.7px">Fr</span><span style="left:153.0px">Sa</span></div>
<span class="pill" style="left:83.6px;top:84.0px;width:48.2px;background:#016c66"></span>
<span class="pill" style="left:35.4px;top:113.0px;width:48.2px;background:#016c66"></span>
<span class="pill" style="left:107.7px;top:113.0px;width:48.2px;background:#016c66"></span>
<span class="pill" style="left:107.7px;top:142.0px;width:48.2px;background:#016c66"></span>
<span class="pill" style="left:35.4px;top:170.0px;width:48.2px;background:#016c66"></span>
<span class="dn" style="left:11.3px;top:56.0px">01</span>
<span class="dn" style="left:35.4px;top:56.0px">02</span>
<span class="dn" style="left:59.5px;top:56.0px">03</span>
<span class="dn" style="left:83.6px;top:56.0px">04</span>
<span class="dn" style="left:107.7px;top:56.0px">05</span>
<span class="dn" style="left:131.8px;top:56.0px">06</span>
<span class="dn" style="left:155.9px;top:56.0px">07</span>
<span class="dn" style="left:11.3px;top:84.0px">08</span>
<span class="dn" style="left:35.4px;top:84.0px">09</span>
<span class="dn" style="left:59.5px;top:84.0px">10</span>
<span class="dn t" style="left:83.6px;top:84.0px">11</span>
<span class="dn t" style="left:107.7px;top:84.0px">12</span>
<span class="dn" style="left:131.8px;top:84.0px">13</span>
<span class="dn" style="left:155.9px;top:84.0px">14</span>
<span class="dn" style="left:11.3px;top:113.0px">15</span>
<span class="dn t" style="left:35.4px;top:113.0px">16</span>
<span class="dn t" style="left:59.5px;top:113.0px">17</span>
<span class="dn" style="left:83.6px;top:113.0px">18</span>
<span class="dn t" style="left:107.7px;top:113.0px">19</span>
<span class="dn t" style="left:131.8px;top:113.0px">20</span>
<span class="dn" style="left:155.9px;top:113.0px">21</span>
<span class="dn" style="left:11.3px;top:142.0px">22</span>
<span class="dn" style="left:35.4px;top:142.0px">23</span>
<span class="dn" style="left:59.5px;top:142.0px">24</span>
<span class="dn" style="left:83.6px;top:142.0px">25</span>
<span class="dn t" style="left:107.7px;top:142.0px">26</span>
<span class="dn t" style="left:131.8px;top:142.0px">27</span>
<span class="dn" style="left:155.9px;top:142.0px">28</span>
<span class="dn" style="left:11.3px;top:170.0px">29</span>
<span class="dn t" style="left:35.4px;top:170.0px">30</span>
<span class="dn t" style="left:59.5px;top:170.0px">31</span>
</div>
<div class="mo" style="left:249px;top:106px"><span class="mn">February</span>
<div class="hd"><span style="left:1.2px">Su</span><span style="left:26.5px">Mo</span><span style="left:51.8px">Tu</span><span style="left:77.1px">We</span><span style="left:102.4px">Th</span><span style="left:127.7px">Fr</span><span style="left:153.0px">Sa</span></div>
<span class="pill" style="left:83.6px;top:56.0px;width:48.2px;background:#016c66"></span>
<span class="pill" style="left:107.7px;top:84.0px;width:48.2px;background:#016c66"></span>
<span class="pill" style="left:59.5px;top:113.0px;width:48.2px;background:#016c66"></span>
<span class="pill" style="left:107.7px;top:113.0px;width:24.1px;background:#016c66"></span>
<span class="pill" style="left:59.5px;top:142.0px;width:48.2px;background:#016c66"></span>
<span class="pill" style="left:131.8px;top:56.0px;width:24.1px;background:#f7b750"></span>
<span class="pill" style="left:155.9px;top:113.0px;width:24.1px;background:#f7b750"></span>
<span class="dn t" style="left:83.6px;top:56.0px">01</span>
<span class="dn t" style="left:107.7px;top:56.0px">02</span>
<span class="dn o" style="left:131.8px;top:56.0px">03</span>
<span class="dn" style="left:155.9px;top:56.0px">04</span>
<span class="dn" style="left:11.3px;top:84.0px">05</span>
<span class="dn" style="left:35.4px;top:84.0px">06</span>
<span class="dn" style="left:59.5px;top:84.0px">07</span>
<span class="dn" style="left:83.6px;top:84.0px">08</span>
<span class="dn t" style="left:107.7px;top:84.0px">09</span>
<span class="dn t" style="left:131.8px;top:84.0px">10</span>
<span class="dn" style="left:155.9px;top:84.0px">11</span>
<span class="dn" style="left:11.3px;top:113.0px">12</span>
<span class="dn" style="left:35.4px;top:113.0px">13</span>
<span class="dn t" style="left:59.5px;top:113.0px">14</span>
<span class="dn t" style="left:83.6px;top:113.0px">15</span>
<span class="dn t" style="left:107.7px;top:113.0px">16</span>
<span class="dn" style="left:131.8px;top:113.0px">17</span>
<span class="dn o" style="left:155.9px;top:113.0px">18</span>
<span class="dn" style="left:11.3px;top:142.0px">19</span>
<span class="dn" style="left:35.4px;top:142.0px">20</span>
<span class="dn t" style="left:59.5px;top:142.0px">21</span>
<span class="dn t" style="left:83.6px;top:142.0px">22</span>
<span class="dn" style="left:107.7px;top:142.0px">23</span>
<span class="dn" style="left:131.8px;top:142.0px">24</span>
<span class="dn" style="left:155.9px;top:142.0px">25</span>
<span class="dn" style="left:11.3px;top:170.0px">26</span>
<span class="dn" style="left:35.4px;top:170.0px">27</span>
<span class="dn" style="left:59.5px;top:170.0px">28</span>
</div>
<div class="mo" style="left:469px;top:106px"><span class="mn">March</span>
<div class="hd"><span style="left:1.2px">Su</span><span style="left:26.5px">Mo</span><span style="left:51.8px">Tu</span><span style="left:77.1px">We</span><span style="left:102.4px">Th</span><span style="left:127.7px">Fr</span><span style="left:153.0px">Sa</span></div>
<span class="pill" style="left:131.8px;top:56.0px;width:24.1px;background:#016c66"></span>
<span class="pill" style="left:59.5px;top:84.0px;width:24.1px;background:#016c66"></span>
<span class="pill" style="left:107.7px;top:113.0px;width:24.1px;background:#016c66"></span>
<span class="pill" style="left:131.8px;top:113.0px;width:24.1px;background:#f7b750"></span>
<span class="dn" style="left:83.6px;top:56.0px">01</span>
<span class="dn" style="left:107.7px;top:56.0px">02</span>
<span class="dn t" style="left:131.8px;top:56.0px">03</span>
<span class="dn" style="left:155.9px;top:56.0px">04</span>
<span class="dn" style="left:11.3px;top:84.0px">05</span>
<span class="dn" style="left:35.4px;top:84.0px">06</span>
<span class="dn t" style="left:59.5px;top:84.0px">07</span>
<span class="dn" style="left:83.6px;top:84.0px">08</span>
<span class="dn" style="left:107.7px;top:84.0px">09</span>
<span class="dn" style="left:131.8px;top:84.0px">10</span>
<span class="dn" style="left:155.9px;top:84.0px">11</span>
<span class="dn" style="left:11.3px;top:113.0px">12</span>
<span class="dn" style="left:35.4px;top:113.0px">13</span>
<span class="dn" style="left:59.5px;top:113.0px">14</span>
<span class="dn" style="left:83.6px;top:113.0px">15</span>
<span class="dn t" style="left:107.7px;top:113.0px">16</span>
<span class="dn o" style="left:131.8px;top:113.0px">17</span>
<span class="dn" style="left:155.9px;top:113.0px">18</span>
<span class="dn" style="left:11.3px;top:142.0px">19</span>
<span class="dn" style="left:35.4px;top:142.0px">20</span>
<span class="dn" style="left:59.5px;top:142.0px">21</span>
<span class="dn" style="left:83.6px;top:142.0px">22</span>
<span class="dn" style="left:107.7px;top:142.0px">23</span>
<span class="dn" style="left:131.8px;top:142.0px">24</span>
<span class="dn" style="left:155.9px;top:142.0px">25</span>
<span class="dn" style="left:11.3px;top:170.0px">26</span>
<span class="dn" style="left:35.4px;top:170.0px">27</span>
<span class="dn" style="left:59.5px;top:170.0px">28</span>
<span class="dn" style="left:83.6px;top:170.0px">29</span>
<span class="dn" style="left:107.7px;top:170.0px">30</span>
<span class="dn" style="left:131.8px;top:170.0px">31</span>
</div>
<div class="mo" style="left:689px;top:106px"><span class="mn">April</span>
<div class="hd"><span style="left:1.2px">Su</span><span style="left:26.5px">Mo</span><span style="left:51.8px">Tu</span><span style="left:77.1px">We</span><span style="left:102.4px">Th</span><span style="left:127.7px">Fr</span><span style="left:153.0px">Sa</span></div>
<span class="dn" style="left:155.9px;top:56.0px">01</span>
<span class="dn" style="left:11.3px;top:84.0px">02</span>
<span class="dn" style="left:35.4px;top:84.0px">03</span>
<span class="dn" style="left:59.5px;top:84.0px">04</span>
<span class="dn" style="left:83.6px;top:84.0px">05</span>
<span class="dn" style="left:107.7px;top:84.0px">06</span>
<span class="dn" style="left:131.8px;top:84.0px">07</span>
<span class="dn" style="left:155.9px;top:84.0px">08</span>
<span class="dn" style="left:11.3px;top:113.0px">09</span>
<span class="dn" style="left:35.4px;top:113.0px">10</span>
<span class="dn" style="left:59.5px;top:113.0px">11</span>
<span class="dn" style="left:83.6px;top:113.0px">12</span>
<span class="dn" style="left:107.7px;top:113.0px">13</span>
<span class="dn" style="left:131.8px;top:113.0px">14</span>
<span class="dn" style="left:155.9px;top:113.0px">15</span>
<span class="dn" style="left:11.3px;top:142.0px">16</span>
<span class="dn" style="left:35.4px;top:142.0px">17</span>
<span class="dn" style="left:59.5px;top:142.0px">18</span>
<span class="dn" style="left:83.6px;top:142.0px">19</span>
<span class="dn" style="left:107.7px;top:142.0px">20</span>
<span class="dn" style="left:131.8px;top:142.0px">21</span>
<span class="dn" style="left:155.9px;top:142.0px">22</span>
<span class="dn" style="left:11.3px;top:170.0px">23</span>
<span class="dn" style="left:35.4px;top:170.0px">24</span>
<span class="dn" style="left:59.5px;top:170.0px">25</span>
<span class="dn" style="left:83.6px;top:170.0px">26</span>
<span class="dn" style="left:107.7px;top:170.0px">27</span>
<span class="dn" style="left:131.8px;top:170.0px">28</span>
<span class="dn" style="left:155.9px;top:170.0px">29</span>
<span class="dn" style="left:11.3px;top:199.0px">30</span>
</div>
<div class="mo" style="left:29px;top:370px"><span class="mn">May</span>
</div>
<div class="mo" style="left:249px;top:370px"><span class="mn">June</span>
</div>
<div class="mo" style="left:469px;top:370px"><span class="mn">July</span>
</div>
<div class="mo" style="left:689px;top:370px"><span class="mn">August</span>
</div>
</div>
</div>
<div class="abs" style="left:1884px;top:167px;width:17px;height:753px;background:#f1f1f1"></div>
<div class="abs" style="left:1886px;top:184px;width:13px;height:403px;background:#c1c1c1"></div>
<svg class="abs" style="left:1888px;top:174px" width="9" height="5" viewBox="0 0 9 5"><path d="M0 5L4.5 0 9 5z" fill="#a3a3a3"/></svg>
<svg class="abs" style="left:1888px;top:910px" width="9" height="5" viewBox="0 0 9 5"><path d="M0 0L4.5 5 9 0z" fill="#505050"/></svg>
</body></html>
